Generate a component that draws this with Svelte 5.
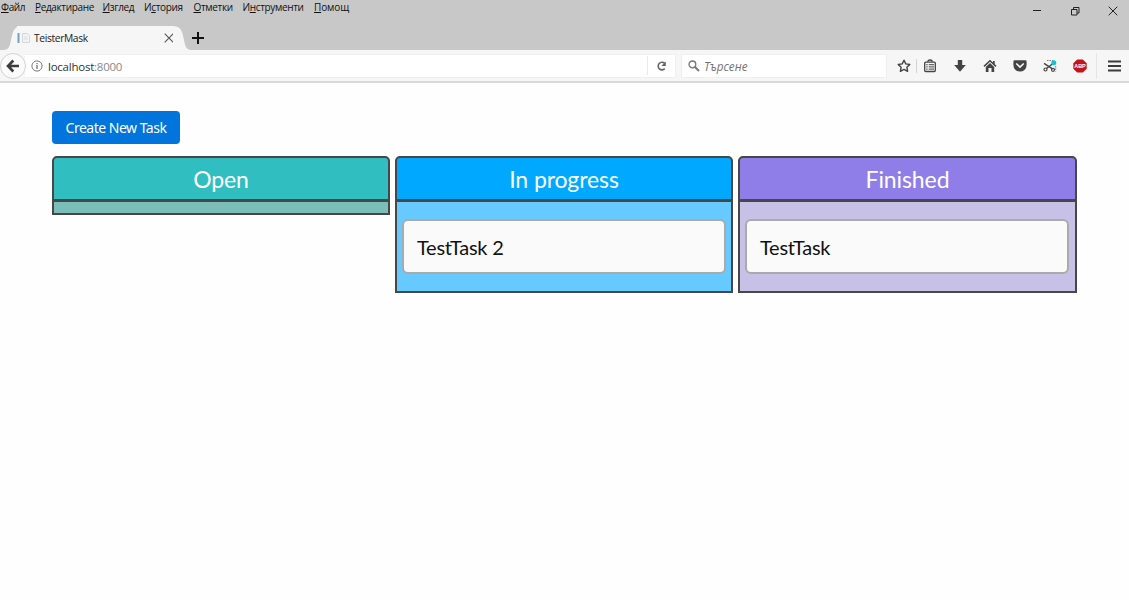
<script>
  const menus = [
    { before: '', key: 'Ф', after: 'айл', width: 34 },
    { before: '', key: 'Р', after: 'едактиране', width: 67.5 },
    { before: '', key: 'И', after: 'зглед', width: 41.5 },
    { before: 'И', key: 'с', after: 'тория', width: 49.5 },
    { before: '', key: 'О', after: 'тметки', width: 49 },
    { before: 'И', key: 'н', after: 'струменти', width: 71.5 },
    { before: '', key: 'П', after: 'омощ', width: 40 }
  ];
  const columns = [
    { title: 'Open', kind: 'open', tasks: [] },
    { title: 'In progress', kind: 'progress', tasks: ['TestTask 2'] },
    { title: 'Finished', kind: 'finished', tasks: ['TestTask'] }
  ];
</script>

<div class="window">
  <header>
    <div class="menubar">
      <nav>
        {#each menus as m}
          <span style="width:{m.width}px">{m.before}<u>{m.key}</u>{m.after}</span>
        {/each}
      </nav>
      <div class="controls">
        <svg width="10" height="10"><path d="M1 4.5h8" stroke="#222" /></svg>
        <svg width="10" height="10" fill="none" stroke="#222"><path d="M1.5 3.5h5.5v5.5h-5.5zM3.5 3.5v-2h5.5v5.5h-2" /></svg>
        <svg width="10" height="10" stroke="#222"><path d="M.7.7l8.6 8.6M9.3.7L.7 9.3" /></svg>
      </div>
    </div>
    <div class="tabs">
      <svg width="18" height="24"><path d="M0 24C7 24 6 15 9 6Q11 0 18 0V24z" fill="#f6f6f6" /></svg>
      <div class="tab">
        <svg width="14" height="14"><path d="M1.5 2v10" stroke="#6fa3c5" stroke-width="2" /><path d="M5.5 2.5h5l2 2v7h-7z" fill="#f2f2f2" stroke="#d4d8da" /><path d="M7 6h3M7 8h4" stroke="#d5dfe5" /></svg>
        <span>TeisterMask</span>
        <svg width="10" height="10" stroke="#555" stroke-width="1.1"><path d="M.7.7l8.6 8.6M9.3.7L.7 9.3" /></svg>
      </div>
      <svg width="18" height="24"><path d="M18 24C11 24 12 15 9 6Q7 0 0 0V24z" fill="#f6f6f6" /></svg>
      <svg class="plus" width="14" height="14"><path d="M7 1v12M1 7h12" stroke="#111" stroke-width="2" /></svg>
    </div>
    <div class="toolbar">
      <div class="back"><svg width="14" height="14" fill="none" stroke="#3c3c3c" stroke-width="2.6"><path d="M7.3 1.5L2 7l5.3 5.5M2.5 7H13" /></svg></div>
      <div class="address">
        <svg width="12" height="12"><circle cx="6" cy="6" r="5.1" fill="none" stroke="#777" /><path d="M6 5.1v3.8M6 2.9v1.3" stroke="#666" stroke-width="1.2" /></svg>
        <span class="url">localhost<i>:8000</i></span>
        <div class="reload"><svg width="12" height="12"><path d="M8.8 8.6A3.8 3.8 0 1 1 8.6 3.3" fill="none" stroke="#666" stroke-width="1.6" /><path d="M9.8 1.4v4.5H5.3z" fill="#666" /></svg></div>
      </div>
      <div class="search">
        <svg width="12" height="12" fill="none" stroke="#777"><circle cx="4.4" cy="4.4" r="3.4" stroke-width="1.3" /><path d="M7 7l4 4" stroke-width="2" /></svg>
        <span>Търсене</span>
      </div>
      <div class="tools">
        <svg viewBox="0 0 14 14"><path d="M7 1.2l1.8 3.7 4 .6-2.9 2.8.7 4L7 10.4l-3.6 1.9.7-4-2.9-2.8 4-.6z" fill="none" stroke="#444" stroke-width="1.4" stroke-linejoin="round" /></svg>
        <b></b>
        <svg viewBox="0 0 14 14"><path d="M4.8 2.8Q4.8 1 7 1t2.2 1.8" fill="none" stroke="#444" stroke-width="1.3" /><rect x="1.7" y="3.2" width="10.6" height="9.3" rx="1" fill="#f6f6f6" stroke="#444" stroke-width="1.3" /><path d="M3.2 5.7h1.5M5.7 5.7H11M3.2 7.9h1.5M5.7 7.9H11M3.2 10.1h1.5M5.7 10.1H11" stroke="#444" /></svg>
        <svg viewBox="0 0 14 14"><path d="M4.8 1h4.4v5h3.6L7 12.8 1.2 6h3.6z" fill="#444" /></svg>
        <svg viewBox="0 0 14 14"><path d="M1 7.4L7 1.8l6 5.6" fill="none" stroke="#444" stroke-width="1.5" /><path d="M10 2h1.7v3.8L10 4.2zM2.8 7.9L7 4l4.2 3.9V13H8.5V9h-3v4H2.8z" fill="#444" /></svg>
        <svg viewBox="0 0 14 14"><path d="M1.8 1.2h10.4q1.4 0 1.4 1.4V6a6.6 6.6 0 0 1-13.2 0V2.6q0-1.4 1.4-1.4z" fill="#444" /><path d="M3.8 5L7 8l3.2-3" fill="none" stroke="#f6f6f6" stroke-width="1.7" stroke-linecap="round" /></svg>
        <svg viewBox="0 0 14 14"><path d="M4 1.5h6M12.7 7v5.5" stroke="#777" stroke-dasharray="1.5 1" /><path d="M1 4.3l8.5 5.5M3.5 9.5L10 4.5" stroke="#444" stroke-width="1.4" /><g fill="none" stroke="#444" stroke-width="1.2"><circle cx="2.5" cy="10.5" r="1.5" /><circle cx="10" cy="10.8" r="1.5" /></g><circle cx="10.8" cy="3.8" r="2.5" fill="#0bc5dc" /></svg>
        <svg viewBox="0 0 14 14"><path d="M4.2.4h5.6l3.9 3.9v5.4l-3.9 3.9H4.2L.3 9.7V4.3z" fill="#c51318" /><text x="7" y="9.2" text-anchor="middle" textLength="11.6" lengthAdjust="spacingAndGlyphs">ABP</text></svg>
      </div>
      <div class="burger"><svg width="13" height="12"><path d="M0 1.5h13M0 6h13M0 10.5h13" stroke="#3c3c3c" stroke-width="2.2" /></svg></div>
    </div>
  </header>

  <main>
    <button>Create New Task</button>
    <div class="board">
      {#each columns as c}
        <section class={c.kind}>
          <h2>{c.title}</h2>
          <div class="tasks">
            {#each c.tasks as t}<article>{t}</article>{/each}
          </div>
        </section>
      {/each}
    </div>
  </main>
</div>

<style>
  :global(body) { background: #fefefe; }
  * { box-sizing: border-box; }
  .window { height: 600px; overflow: hidden; font-family: "Open Sans", "Noto Sans", sans-serif; }
  header { background: #c8c8c8; height: 83px; border-bottom: 2px solid #d9d9d9; }
  svg { display: block; flex: none; }
  .menubar { height: 26px; display: flex; justify-content: space-between; }
  nav { display: flex; padding-left: 1px; font: 10px/15px "Open Sans", sans-serif; color: #111; }
  nav span { white-space: nowrap; letter-spacing: -.35px; }
  nav span:last-child { letter-spacing: -.1px; }
  u { text-underline-offset: 1px; }
  .controls { display: flex; gap: 28px; padding: 6px 11px 0 0; }
  .tabs { height: 24px; display: flex; padding-left: 4px; }
  .tab { width: 157px; background: #f6f6f6; display: flex; align-items: center; margin: 0 -1px 0 -5px; }
  .tab span { font-size: 10.3px; color: #222; margin-left: 3px; flex: 1; letter-spacing: -.38px; }
  .tab svg:last-child { margin-right: 0; }
  .plus { margin: 5px 0 0 0; }
  .toolbar { height: 31px; background: #f6f6f6; display: flex; align-items: center; }
  .back { width: 26px; height: 26px; border: 1px solid #d2d2d2; border-radius: 50%; background: #fbfbfb; display: grid; place-items: center; z-index: 1; }
  .address { width: 651px; height: 24px; background: #fff; display: flex; align-items: center; margin-left: -1px; padding-left: 6px; border: 1px solid #f0f0f0; border-left: 0; }
  .url { font-size: 11.5px; color: #333; margin-left: 5px; flex: 1; letter-spacing: -.24px; position: relative; top: 1px; }
  .url i { font-style: normal; color: #888; }
  .reload { width: 28px; height: 19px; border-left: 1px solid #e9e9e9; display: grid; place-items: center; }
  .search { margin-left: 5px; width: 206px; height: 24px; background: #fff; border: 1px solid #f0f0f0; display: flex; align-items: center; padding-left: 6px; }
  .search span { margin-left: 4px; font-size: 11.7px; font-style: italic; color: #747474; }
  .tools { display: flex; align-items: center; margin-left: 10px; }
  .tools svg { width: 14px; height: 14px; margin-right: 16px; }
  .tools svg:first-child { margin-right: 5px; }
  .tools b { width: 1px; height: 14px; background: #d3d3d3; margin-right: 6px; }
  text { font: bold 6px "Liberation Sans", sans-serif; fill: #fff; }
  .burger { height: 26px; border-left: 1px solid #e5e5e5; display: grid; place-items: center; padding-left: 11px; margin-left: -7px; }
  main { padding: 28px 52px 0; }
  button { display: block; width: 128px; height: 33px; padding: 0; border: 0; border-radius: 4px; background: #0275dc; color: #fff; font: 14px/33px "Noto Sans", sans-serif; letter-spacing: -.5px; }
  .board { display: grid; grid-template-columns: 338px 338px 339px; gap: 5px; align-items: start; margin-top: 12px; font-family: Lato, sans-serif; }
  h2 { margin: 0; height: 45px; border: 2px solid #474747; border-radius: 5px 5px 0 0; color: #fff; font-size: 23px; line-height: 42px; font-weight: 400; text-align: center; letter-spacing: -.1px; }
  .tasks { border: 2px solid #474747; border-top-width: 1px; min-height: 14px; }
  article { margin: 17px 6px 17px 5px; height: 55px; border: 2px solid #aaa; border-radius: 6px; background: #fafafa; color: #111; font-size: 20px; line-height: 53px; padding-left: 13px; letter-spacing: -.25px; font-kerning: normal; }
  .progress article { margin-right: 5px; }
  .open h2 { background: #31bec0; }
  .open .tasks { background: #7abdb9; }
  .progress h2 { background: #00a8ff; }
  .progress .tasks { background: #66c9ff; }
  .finished h2 { background: #8f7ee8; }
  .finished .tasks { background: #c8c1e7; }
</style>
